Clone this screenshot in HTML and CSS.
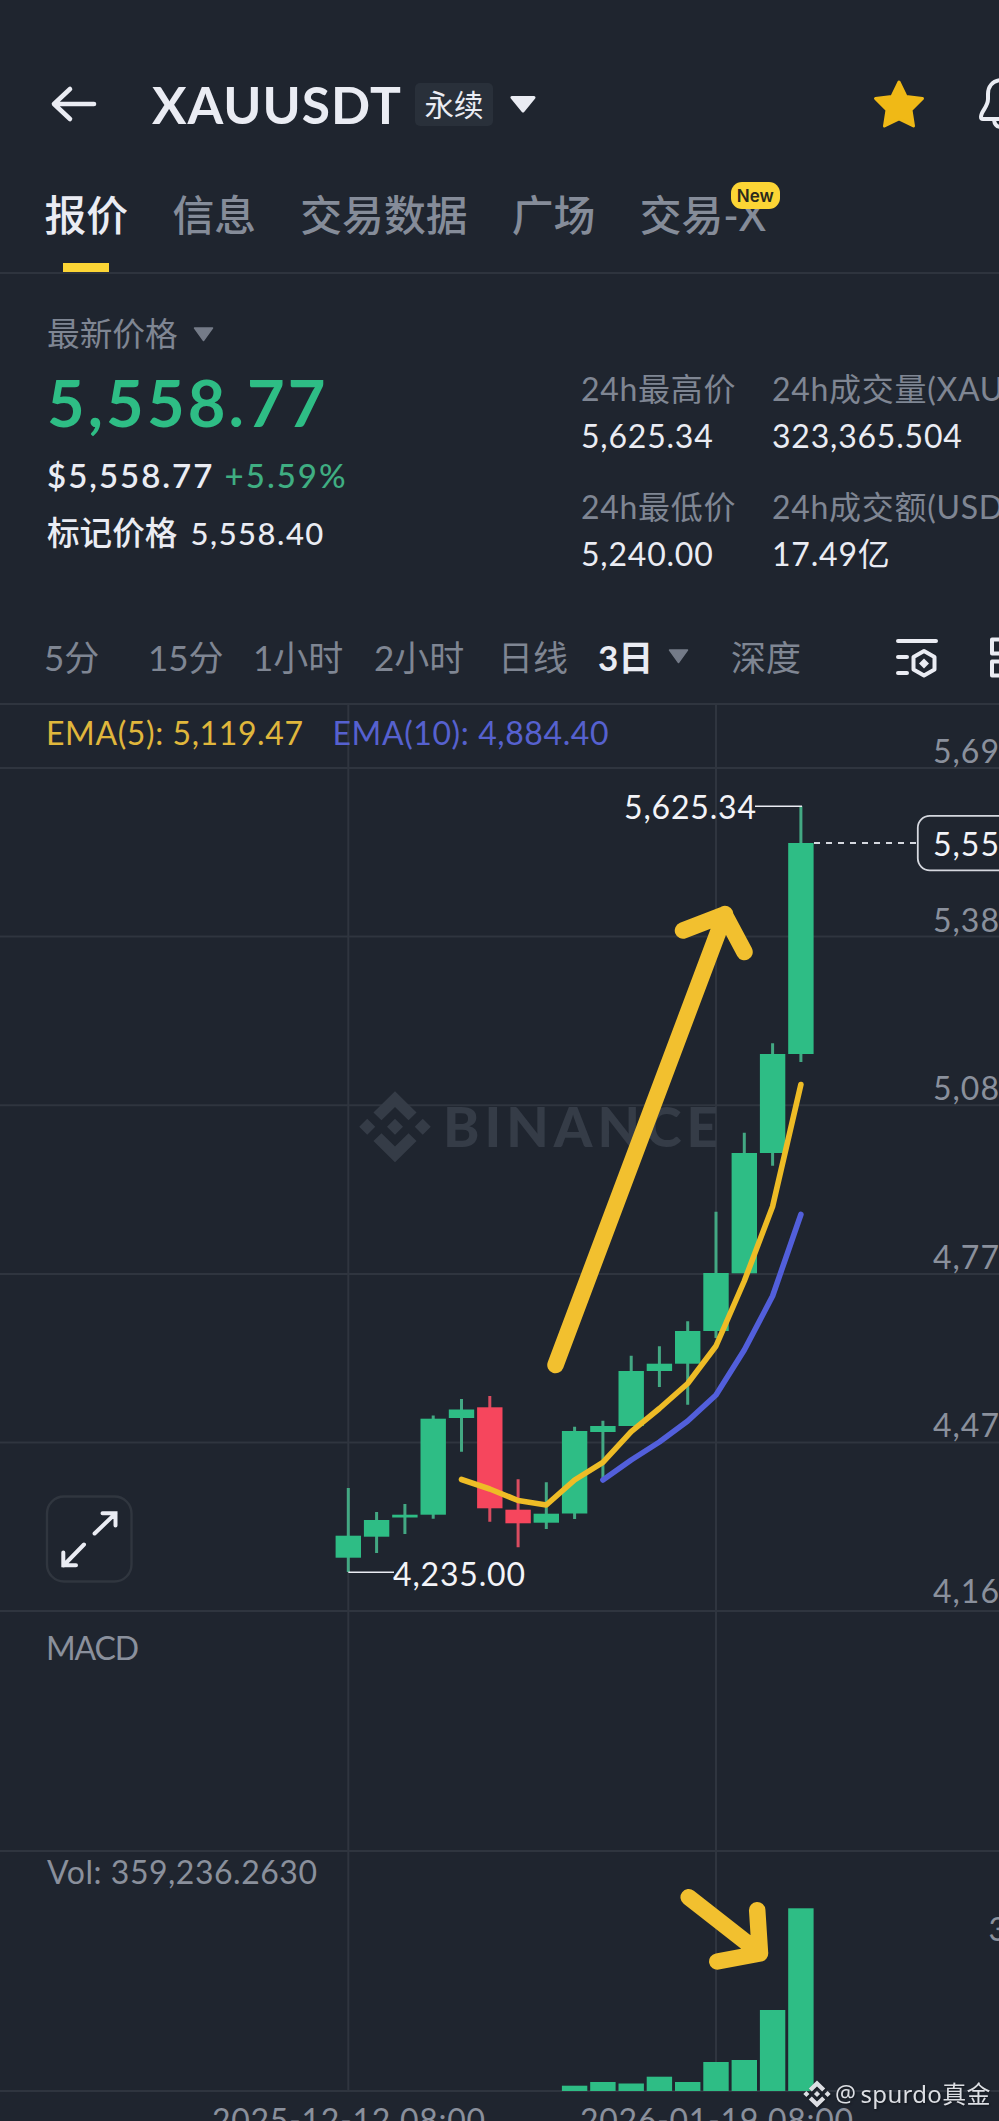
FILE: index.html
```html
<!DOCTYPE html>
<html lang="zh-CN">
<head>
<meta charset="UTF-8">
<meta name="viewport" content="width=device-width, initial-scale=1.0">
<title>XAUUSDT 永续</title>
<link rel="stylesheet" href="styles.css">
</head>
<body>
	<header class="topbar">
		<svg class="back" width="48" height="40" viewBox="0 0 48 40">
			<path d="M20 5 L4 20 L20 35 M4 20 H44" />
		</svg>
		<h1>XAUUSDT</h1>
		<span class="tag">永续</span>
		<svg class="caret-title" width="26" height="17" viewBox="0 0 26 17"><path d="M2 1.500 H24 L13 15 Z" /></svg>
		<svg class="star" width="52" height="50" viewBox="0 0 52 50">
			<path d="M26 3 L33 17.500 L49.500 19.500 L38 31 L40.500 47 L26 40 L11.500 47 L14 31 L2.500 19.500 L19 17.500 Z" />
		</svg>
		<svg class="bell" width="46" height="54" viewBox="0 0 46 54">
			<path d="M23 3 C14 4 10 10 10 17 V22 C10 30 3 34 3 40 Q3 42 5 42 H41 Q43 42 43 40 C43 34 36 30 36 22 V17 C36 10 32 4 23 3 Z M16 43 Q17 50 23 50 Q29 50 30 43" />
		</svg>
	</header>

	<nav class="tabs">
		<a class="tab active">报价</a>
		<a class="tab">信息</a>
		<a class="tab">交易数据</a>
		<a class="tab">广场</a>
		<a class="tab">交易-X<span class="badge">New</span></a>
	</nav>

	<section class="ticker">
		<div class="price">
			<div class="price-label">最新价格 <svg width="21" height="15" viewBox="0 0 21 15"><path d="M1.500 1 H19.500 L10.500 13.500 Z" /></svg></div>
			<div class="price-last">5,558.77</div>
			<div class="price-usd">$5,558.77 <span>+5.59%</span></div>
			<div class="price-mark">标记价格 <span>5,558.40</span></div>
		</div>
		<div class="stats">
			<div class="stat"><span>24h最高价</span><b>5,625.34</b></div>
			<div class="stat"><span>24h成交量(XAU)</span><b>323,365.504</b></div>
			<div class="stat"><span>24h最低价</span><b>5,240.00</b></div>
			<div class="stat"><span>24h成交额(USDT)</span><b>17.49亿</b></div>
		</div>
	</section>

	<div class="intervals">
		<span>5分</span>
		<span>15分</span>
		<span>1小时</span>
		<span>2小时</span>
		<span>日线</span>
		<span class="on">3日 <svg width="21" height="15" viewBox="0 0 21 15"><path d="M1.500 1 H19.500 L10.500 13.500 Z" /></svg></span>
		<span>深度</span>
		<svg class="tool" width="44" height="42" viewBox="0 0 44 42">
			<path d="M3 4 H41 M3 20 H12 M3 36 H12 M29 14 L39.500 20 V32.500 L29 38.500 L18.500 32.500 V20 Z" />
			<path class="dot" d="M29 21.500 L34 26.500 L29 31.500 L24 26.500 Z" />
		</svg>
		<svg class="tool" width="44" height="42" viewBox="0 0 44 42">
			<path d="M3 2.500 H16 V16.500 H3 Z M3 24.500 H16 V38.500 H3 Z M25 2.500 H38 V16.500 H25 Z M25 24.500 H38 V38.500 H25 Z" />
		</svg>
	</div>

	<svg class="chart" width="999" height="1418" viewBox="0 703 999 1418">
		<g class="grid">
			<path d="M0 704 H999 M0 768 H999 M0 936.600 H999 M0 1105.300 H999 M0 1274 H999 M0 1442.600 H999 M0 1611 H999 M0 1851 H999 M0 2091 H999" />
			<path d="M348.300 704 V2091 M716 704 V2091" />
		</g>

		<!-- centre logo -->
		<g class="brand">
			<path transform="translate(395 1126.700) scale(2.220)" d="M0 -16 L9.700 -6.400 L6.100 -2.900 L0 -8.900 L-6.100 -2.900 L-9.700 -6.400 Z M0 16 L9.700 6.400 L6.100 2.900 L0 8.900 L-6.100 2.900 L-9.700 6.400 Z M-12.500 -3.600 L-8.900 0 L-12.500 3.600 L-16.100 0 Z M12.500 -3.600 L16.100 0 L12.500 3.600 L8.900 0 Z M0 -3.600 L3.600 0 L0 3.600 L-3.600 0 Z" />
			<text x="443" y="1146.500" textLength="275">BINANCE</text>
		</g>

		<g class="axis">
			<text x="933" y="763" textLength="66">5,69</text>
			<text x="933" y="931.700" textLength="66">5,38</text>
			<text x="933" y="1100" textLength="66">5,08</text>
			<text x="933" y="1269" textLength="66">4,77</text>
			<text x="933" y="1436.700" textLength="66">4,47</text>
			<text x="933" y="1603" textLength="66">4,16</text>
			<text x="988.500" y="1941">3</text>
			<text x="46" y="1660" textLength="93">MACD</text>
			<text x="47" y="1884.300" textLength="270">Vol: 359,236.2630</text>
			<text x="212" y="2132" textLength="273">2025-12-12 08:00</text>
			<text x="580" y="2132" textLength="273">2026-01-19 08:00</text>
		</g>
		<text class="ema5" x="46" y="744.500" textLength="257">EMA(5): 5,119.47</text>
		<text class="ema10" x="332.500" y="744.500" textLength="276">EMA(10): 4,884.40</text>

		<g class="wick up">
			<path d="M348.300 1488 V1572 M376.600 1512 V1553 M404.900 1504 V1534 M433.200 1415.500 V1518.700 M461.500 1399 V1451.700 M546.300 1482.300 V1529" />
			<path d="M574.600 1426.700 V1519 M602.900 1420.700 V1478 M631.200 1355.700 V1426 M659.400 1346.300 V1387 M687.700 1321.300 V1404.700 M716 1211.700 V1338" />
			<path d="M744.300 1132.700 V1273 M772.600 1043.300 V1165.700 M800.900 806 V1062" />
		</g>
		<g class="wick down">
			<path d="M489.800 1396 V1521.700 M518.100 1479.300 V1547.300" />
		</g>
		<g class="body-up">
			<rect x="335.600" y="1535.700" width="25.400" height="22" />
			<rect x="363.900" y="1520" width="25.400" height="16.700" />
			<rect x="392.200" y="1514.700" width="25.400" height="2.800" />
			<rect x="420.500" y="1418.700" width="25.400" height="96" />
			<rect x="448.800" y="1409.500" width="25.400" height="8.500" />
			<rect x="533.600" y="1513.700" width="25.400" height="9" />
			<rect x="561.900" y="1431" width="25.400" height="82.500" />
			<rect x="590.200" y="1426" width="25.400" height="6" />
			<rect x="618.500" y="1371" width="25.400" height="55" />
			<rect x="646.700" y="1363.700" width="25.400" height="7.300" />
			<rect x="675" y="1331" width="25.400" height="32.700" />
			<rect x="703.300" y="1273" width="25.400" height="58" />
			<rect x="731.600" y="1153" width="25.400" height="120.300" />
			<rect x="759.900" y="1054" width="25.400" height="99" />
			<rect x="788.200" y="843" width="25.400" height="211" />
		</g>
		<g class="body-down">
			<rect x="477.100" y="1407.300" width="25.400" height="101" />
			<rect x="505.400" y="1509.700" width="25.400" height="13.600" />
		</g>

		<!-- volume -->
		<g class="body-up">
			<rect x="561.900" y="2085.700" width="25.400" height="5.300" />
			<rect x="590.200" y="2082" width="25.400" height="9" />
			<rect x="618.500" y="2083.500" width="25.400" height="7.500" />
			<rect x="646.700" y="2076.700" width="25.400" height="14.300" />
			<rect x="675" y="2082" width="25.400" height="9" />
			<rect x="703.300" y="2062" width="25.400" height="29" />
			<rect x="731.600" y="2060" width="25.400" height="31" />
			<rect x="759.900" y="2010" width="25.400" height="81" />
			<rect x="788.200" y="1908.300" width="25.400" height="182.700" />
		</g>

		<polyline class="line10" points="602.900,1480 631.200,1460 659.400,1442 687.700,1421 716,1395 744.300,1350 772.600,1296 800.900,1214.500" />
		<polyline class="line5" points="461.500,1479.500 489.800,1489 518.100,1500.500 546.300,1505 574.600,1480 602.900,1462.300 631.200,1431.700 659.400,1408.500 687.700,1383.500 716,1346 744.300,1281 772.600,1206.500 800.900,1084.500" />

		<!-- high, low and last price -->
		<path class="mark" d="M755 806.300 H802 M348.300 1572.300 H394" />
		<text class="mark-text" x="624" y="818.700" textLength="132">5,625.34</text>
		<text class="mark-text" x="393" y="1585.700" textLength="132">4,235.00</text>
		<path class="last-line" d="M814 843 H917" />
		<rect class="last-box" x="917.800" y="815.800" width="120" height="54.500" rx="12" />
		<text class="mark-text" x="933" y="855.700" textLength="66">5,55</text>

		<g class="expand">
			<rect x="47" y="1496.500" width="84.500" height="85" rx="17" />
			<path d="M94.600 1533.500 L115.500 1513.500 M102.500 1513.300 H115.500 V1525.500 M84 1544.500 L63.500 1565.500 M63.300 1552.500 V1565.200 H76" />
		</g>

		<g class="drawing">
			<path d="M555.500 1365 L725 914 M683 930.500 L724.500 914.500 L744.500 952" />
			<path d="M688.700 1897.300 L760 1953 M757.200 1910.300 L760 1953.500 L717.300 1961.500" />
		</g>

		<g class="author">
			<path transform="translate(817 2094) scale(0.850)" d="M0 -16 L9.700 -6.400 L6.100 -2.900 L0 -8.900 L-6.100 -2.900 L-9.700 -6.400 Z M0 16 L9.700 6.400 L6.100 2.900 L0 8.900 L-6.100 2.900 L-9.700 6.400 Z M-12.500 -3.600 L-8.900 0 L-12.500 3.600 L-16.100 0 Z M12.500 -3.600 L16.100 0 L12.500 3.600 L8.900 0 Z M0 -3.600 L3.600 0 L0 3.600 L-3.600 0 Z" />
			<text x="835" y="2102" textLength="21" lengthAdjust="spacingAndGlyphs">@</text>
			<text x="860.500" y="2102.500" textLength="130">spurdo真金</text>
		</g>
	</svg>
</body>
</html>
```
FILE: styles.css
```css
* {
    box-sizing: border-box;
}

body {
    margin: 0;
    width: 999px;
    height: 2121px;
    overflow: hidden;
    background: #1f252f;
    color: #eaecf3;
    font-family: Lato, "Noto Sans CJK SC", sans-serif;
}

svg {
    display: block;
    flex: none;
}

.topbar {
    display: flex;
    align-items: center;
    height: 180px;
    padding: 28px 0 0 50px;
}

.back path,
.bell path,
.tool path {
    fill: none;
    stroke: #eaecf3;
    stroke-width: 4;
    stroke-linecap: round;
    stroke-linejoin: round;
}

.back path {
    stroke-width: 4.6;
}

h1 {
    flex: none;
    margin: 0 0 0 54px;
    width: 263px;
    font-size: 51.5px;
    font-weight: 700;
    line-height: 60px;
    letter-spacing: 1px;
    white-space: nowrap;
}

.tag {
    flex: none;
    width: 78px;
    height: 43px;
    border-radius: 5px;
    background: #29303a;
    font-size: 29.5px;
    line-height: 43px;
    text-align: center;
}

.caret-title {
    margin-left: 17px;
}

.caret-title path {
    fill: #eaecf3;
    stroke: #eaecf3;
    stroke-width: 3;
    stroke-linejoin: round;
}

.star {
    margin-left: 337px;
}

.star path {
    fill: #f0b916;
    stroke: #f0b916;
    stroke-width: 3;
    stroke-linejoin: round;
}

.bell {
    margin-left: 53px;
}

.tabs {
    display: flex;
    gap: 44.3px;
    height: 94px;
    padding-left: 44.5px;
    border-bottom: 2px solid #2e343e;
}

.tab {
    position: relative;
    color: #858c99;
    font-size: 41.8px;
    font-weight: 500;
    line-height: 71px;
    white-space: nowrap;
}

.tab.active {
    color: #eaecf3;
}

.tab.active::after {
    content: "";
    position: absolute;
    left: 18.5px;
    bottom: 0;
    width: 46px;
    height: 9px;
    background: #fcd535;
}

.badge {
    position: absolute;
    left: 91px;
    top: 2px;
    width: 49px;
    height: 27px;
    border-radius: 11px;
    background: #fcd535;
    color: #2b2a1c;
    font-family: Inter, sans-serif;
    font-size: 17px;
    font-weight: 600;
    line-height: 28px;
    text-align: center;
}

.ticker {
    display: flex;
    height: 337px;
    padding: 40px 0 0 47px;
}

.price {
    width: 534px;
    flex: none;
}

.price-label {
    display: flex;
    align-items: center;
    gap: 15px;
    color: #7f8693;
    font-size: 32.7px;
    line-height: 40px;
}

.price-label path,
.intervals .on path {
    fill: #747b88;
    stroke: #747b88;
    stroke-width: 1.5;
    stroke-linejoin: round;
}

.price-last {
    color: #2ebd85;
    font-size: 65px;
    font-weight: 700;
    line-height: 96px;
    letter-spacing: 3.1px;
    margin-bottom: -2px;
}

.price-usd {
    font-size: 33px;
    font-weight: 600;
    line-height: 55px;
    letter-spacing: 2px;
}

.price-usd span {
    color: #3fae82;
    font-weight: 500;
}

.price-mark {
    font-size: 32.6px;
    font-weight: 500;
    line-height: 59px;
}

.price-mark span {
    margin-left: 5px;
    font-size: 31px;
    letter-spacing: 1.5px;
}

.stats {
    display: grid;
    grid-template-columns: 191px 260px;
    row-gap: 24px;
    align-content: start;
    margin-top: 51px;
}

.stat span,
.stat b {
    display: block;
    font-size: 32px;
    font-weight: 400;
    line-height: 47px;
    letter-spacing: 0.8px;
    white-space: nowrap;
}

.stat span {
    color: #7f8693;
    letter-spacing: 0.7px;
}

.intervals {
    display: grid;
    grid-template-columns: 104px 105px 121px 124px 100px 133px 164px 94px 44px;
    align-items: center;
    height: 92px;
    padding: 0 0 4px 44px;
    color: #7f8693;
    font-size: 35px;
}

.intervals .on {
    display: flex;
    align-items: center;
    gap: 15px;
    color: #eaecf3;
    font-weight: 700;
}

.intervals .on svg {
    margin-top: 3px;
}

.intervals .tool {
    margin-top: 6px;
}

.intervals .tool .dot {
    fill: #eaecf3;
    stroke: none;
}

.chart text {
    font-size: 32px;
}

.grid path {
    stroke: #2f353f;
    stroke-width: 2;
}

.brand {
    fill: #353c47;
}

.chart .brand text {
    font-size: 55px;
    font-weight: 900;
}

.axis {
    fill: #8a909c;
}

.ema5 {
    fill: #e0b73c;
}

.ema10 {
    fill: #5661cf;
}

.wick path {
    stroke-width: 3;
}

.up path {
    stroke: #43a883;
}

.down path {
    stroke: #d94c60;
}

.body-up {
    fill: #2ebd85;
}

.body-down {
    fill: #f6465d;
}

.line5,
.line10 {
    fill: none;
    stroke-width: 5.6;
    stroke-linecap: round;
    stroke-linejoin: round;
}

.line5 {
    stroke: #eebc26;
}

.line10 {
    stroke: #525fdb;
}

.mark {
    stroke: #eaecf3;
    stroke-width: 1.6;
}

.mark-text {
    fill: #f3f4f8;
}

.last-line {
    stroke: #d5d8df;
    stroke-width: 2;
    stroke-dasharray: 6 6;
}

.last-box {
    fill: #1f252f;
    stroke: #d5d8df;
    stroke-width: 1.8;
}

.expand rect {
    fill: #1f252f;
    stroke: #30363f;
    stroke-width: 2.4;
}

.expand path {
    fill: none;
    stroke: #eaecf3;
    stroke-width: 4;
    stroke-linecap: round;
}

.drawing path {
    fill: none;
    stroke: #f2c02f;
    stroke-width: 16.5;
    stroke-linecap: round;
    stroke-linejoin: round;
}

.author {
    fill: #dcdee3;
    filter: drop-shadow(1px 1px 1px #11151b);
}

.chart .author text {
    font-family: "Noto Sans", "Noto Sans CJK SC", sans-serif;
    font-size: 24px;
}
```
